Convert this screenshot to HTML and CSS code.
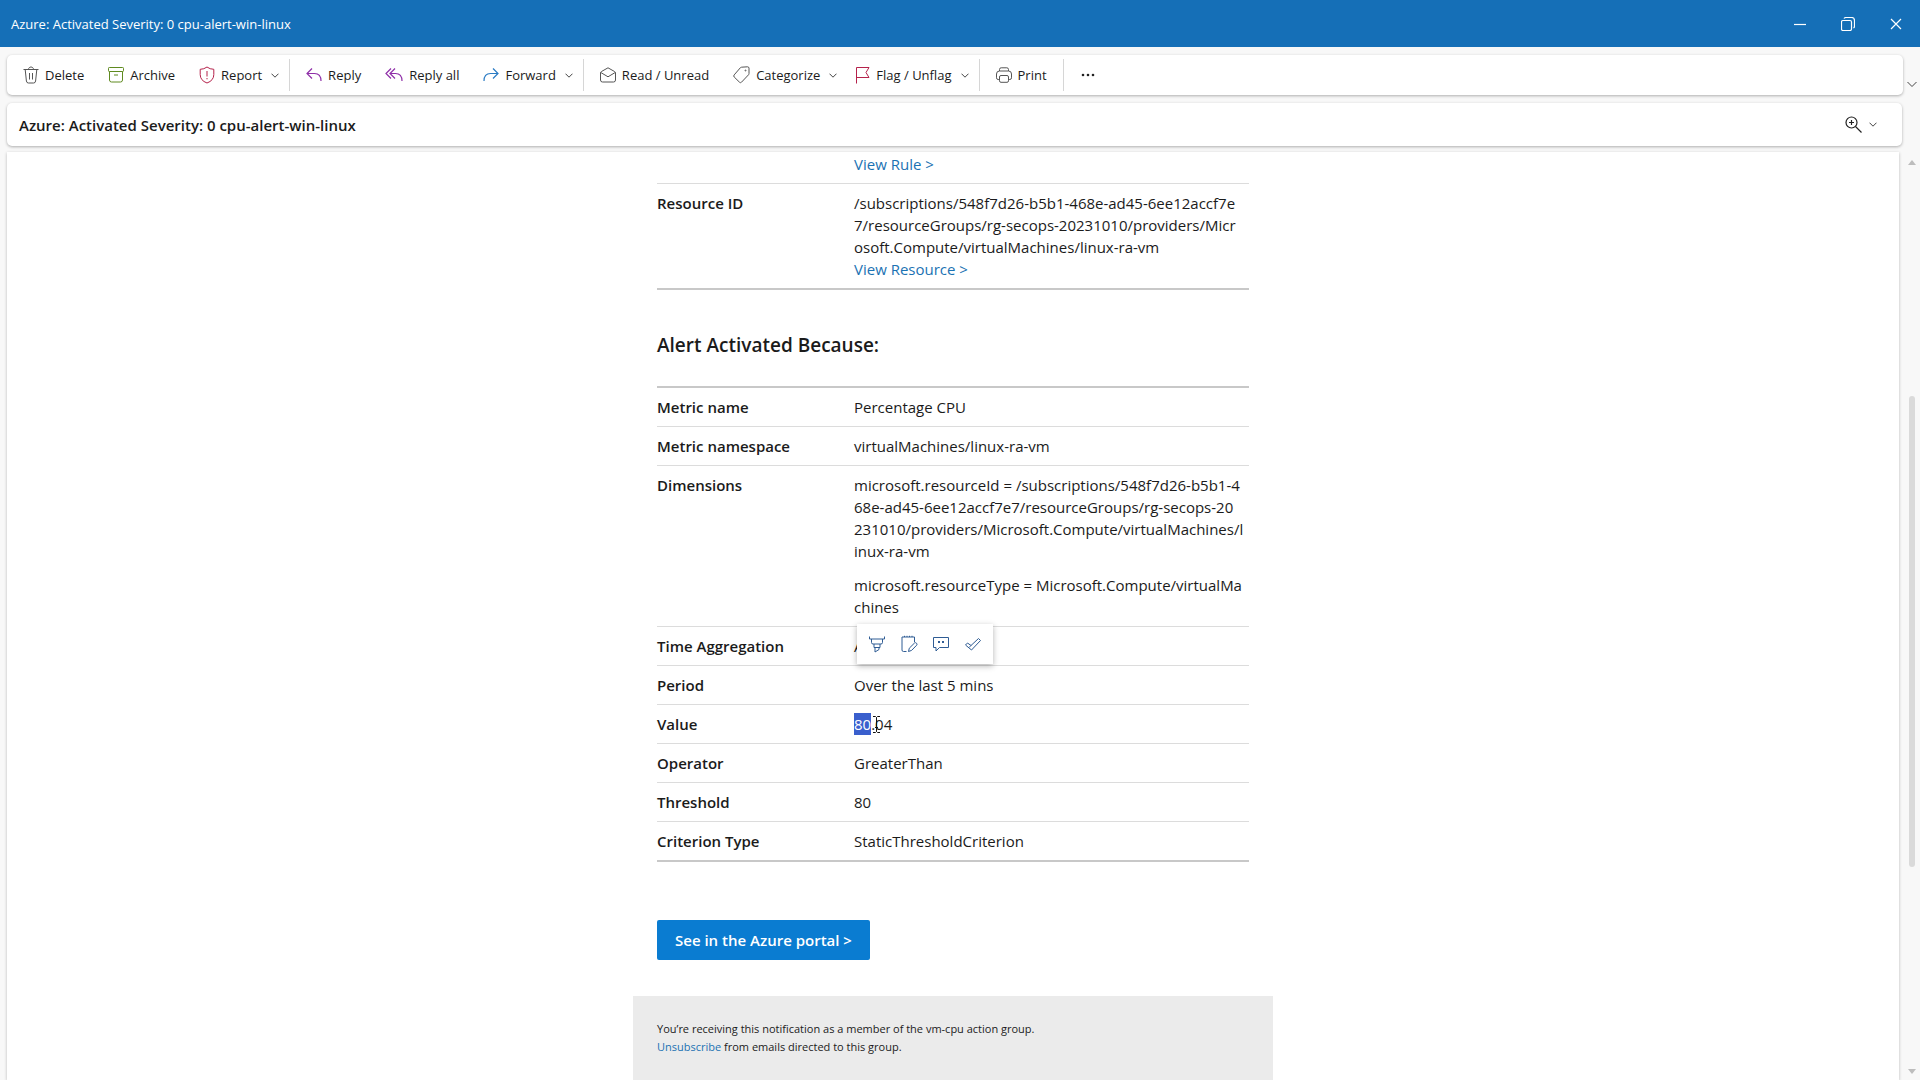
FILE: index.html
```
<!DOCTYPE html>
<html lang="en">
<head>
    <meta charset="UTF-8">
    <meta name="viewport" content="width=device-width, initial-scale=1.0">
    <title>Azure: Activated Severity: 0 cpu-alert-win-linux</title>
    <link rel="stylesheet" href="styles.css">
</head>
<body>
    <header class="titlebar">
        <span>Azure: Activated Severity: 0 cpu-alert-win-linux</span>
        <div class="window-controls">
            <button type="button" aria-label="Minimize">
                <svg width="14" height="14" viewBox="0 0 14 14"><path d="M1 7.5h12"/></svg>
            </button>
            <button type="button" aria-label="Restore">
                <svg width="14" height="14" viewBox="0 0 14 14"><rect x=".5" y="3.5" width="10" height="10" rx="1.5"/><path d="M3 1.5q.6-1 2-1h5.500q3 0 3 3V9q0 1.400-1 2"/></svg>
            </button>
            <button type="button" aria-label="Close">
                <svg width="14" height="14" viewBox="0 0 14 14"><path d="M2 2l10 10M12 2L2 12"/></svg>
            </button>
        </div>
    </header>

    <div class="ribbon">
        <nav class="toolbar card">
            <button type="button" class="tool">
                <svg class="gray" width="16" height="18" viewBox="0 0 16 18"><path d="M.5 3.500h15M5.500 3.500C5.500.2 10.500.2 10.500 3.500M2.200 3.500l1.200 11.500q.2 2 2 2h5.200q1.800 0 2-2l1.200-11.500M6.500 7v6.500M9.500 7v6.500"/></svg>
                Delete
            </button>
            <button type="button" class="tool">
                <svg class="green" width="16" height="16" viewBox="0 0 16 16"><rect x=".5" y=".5" width="15" height="4" rx=".8"/><path d="M1.500 4.500v8.500q0 2 2 2h9q2 0 2-2V4.500M6 8h4"/></svg>
                Archive
            </button>
            <button type="button" class="tool">
                <svg class="red" width="16" height="18" viewBox="0 0 16 18"><path d="M8 1q3 2.300 6.800 2.300V8.500q0 6-6.800 8.500Q1.200 14.500 1.200 8.500V3.300Q5 3.300 8 1zM8 5v5.500M8 12v1.300"/></svg>
                Report
            </button>
            <button type="button" class="drop" aria-label="Report options">
                <svg width="8" height="5" viewBox="0 0 8 5"><path d="M.5.7L4 4.200 7.500.7"/></svg>
            </button>
            <span class="divider"></span>
            <button type="button" class="tool">
                <svg class="purple" width="16" height="16" viewBox="0 0 16 16"><path d="M6 1.500L1 6.500l5 5M1 6.500h7.500q6.500 0 6.500 7.500"/></svg>
                Reply
            </button>
            <button type="button" class="tool">
                <svg class="purple" width="18" height="16" viewBox="0 0 18 16"><path d="M6 1.500L1 6.500l5 5M10 1.500L5 6.500l5 5M5 6.500h5.500q6.500 0 6.500 7.500"/></svg>
                Reply all
            </button>
            <button type="button" class="tool">
                <svg class="blue" width="16" height="16" viewBox="0 0 16 16"><path d="M10 1.500l5 5-5 5M15 6.500H7.500Q1 6.500 1 14"/></svg>
                Forward
            </button>
            <button type="button" class="drop" aria-label="Forward options">
                <svg width="8" height="5" viewBox="0 0 8 5"><path d="M.5.7L4 4.200 7.500.7"/></svg>
            </button>
            <span class="divider"></span>
            <button type="button" class="tool">
                <svg class="gray" width="16" height="16" viewBox="0 0 16 16"><path d="M.5 6q0-1 1-1.500L8 .8l6.500 3.700q1 .5 1 1.500v7q0 2-2 2h-11q-2 0-2-2zM.8 5.500L8 9.800l7.200-4.300"/></svg>
                Read / Unread
            </button>
            <button type="button" class="tool">
                <svg class="gray" width="17" height="18" viewBox="0 0 17 18"><path d="M8.500 1.200l6-.4q1.400 0 1.500 1.300v5.400q0 .7-.5 1.300L8.500 16.200q-1 1-2 0L1.200 11q-1-1 0-2.100L7.400 1.700q.4-.4 1.100-.5z"/><circle cx="12.500" cy="4.500" r=".5"/></svg>
                Categorize
            </button>
            <button type="button" class="drop" aria-label="Categorize options">
                <svg width="8" height="5" viewBox="0 0 8 5"><path d="M.5.7L4 4.200 7.500.7"/></svg>
            </button>
            <button type="button" class="tool">
                <svg class="red" width="15" height="18" viewBox="0 0 15 18"><path d="M1.500 17.500V1.500h12.500l-3 5 3 5H1.500"/></svg>
                Flag / Unflag
            </button>
            <button type="button" class="drop" aria-label="Flag options">
                <svg width="8" height="5" viewBox="0 0 8 5"><path d="M.5.7L4 4.200 7.500.7"/></svg>
            </button>
            <span class="divider"></span>
            <button type="button" class="tool">
                <svg class="gray" width="16" height="16" viewBox="0 0 16 16"><path d="M3.500 4V2.500q0-1.700 1.700-1.700h5.600q1.700 0 1.700 1.700V4M3.500 12.500H2.200q-1.700 0-1.700-1.700V7q0-3 3-3h9q3 0 3 3v3.800q0 1.700-1.700 1.700H12.500"/><rect x="3.500" y="8.500" width="9" height="6.800" rx="1.500"/></svg>
                Print
            </button>
            <span class="divider"></span>
            <button type="button" class="tool" aria-label="More">
                <svg class="dots" width="16" height="4" viewBox="0 0 16 4"><circle cx="3" cy="2" r="1.300"/><circle cx="8" cy="2" r="1.300"/><circle cx="13" cy="2" r="1.300"/></svg>
            </button>
        </nav>
        <button type="button" class="expand" aria-label="Ribbon options">
            <svg width="10" height="7" viewBox="0 0 10 7"><path d="M.5 1L5 5.500 9.500 1"/></svg>
        </button>
    </div>

    <div class="subject card">
        <h1>Azure: Activated Severity: 0 cpu-alert-win-linux</h1>
        <button type="button" class="zoom" aria-label="Zoom">
            <svg class="lens" width="17" height="17" viewBox="0 0 17 17"><circle cx="6.500" cy="6.500" r="5.500"/><path d="M10.500 10.500l6 6M6.500 4v5M4 6.500h5"/></svg>
            <svg width="8" height="5" viewBox="0 0 8 5"><path d="M.5.7L4 4.200 7.500.7"/></svg>
        </button>
    </div>

    <div class="reader">
        <main class="pane">
            <article class="mail">
                <div class="content">
                    <table class="details">
                        <tr class="clipped">
                            <th scope="row"></th>
                            <td><a href="#">View Rule &gt;</a></td>
                        </tr>
                        <tr>
                            <th scope="row">Resource ID</th>
                            <td>
                                /subscriptions/548f7d26-b5b1-468e-ad45-6ee12accf7e<br>
                                7/resourceGroups/rg-secops-20231010/providers/Micr<br>
                                osoft.Compute/virtualMachines/linux-ra-vm<br>
                                <a href="#">View Resource &gt;</a>
                            </td>
                        </tr>
                    </table>

                    <h2>Alert Activated Because:</h2>

                    <table class="details ruled">
                        <tr>
                            <th scope="row">Metric name</th>
                            <td>Percentage CPU</td>
                        </tr>
                        <tr>
                            <th scope="row">Metric namespace</th>
                            <td>virtualMachines/linux-ra-vm</td>
                        </tr>
                        <tr>
                            <th scope="row">Dimensions</th>
                            <td>
                                <p>
                                    microsoft.resourceId = /subscriptions/548f7d26-b5b1-4<br>
                                    68e-ad45-6ee12accf7e7/resourceGroups/rg-secops-20<br>
                                    231010/providers/Microsoft.Compute/virtualMachines/l<br>
                                    inux-ra-vm
                                </p>
                                <p>
                                    microsoft.resourceType = Microsoft.Compute/virtualMa<br>
                                    chines
                                </p>
                            </td>
                        </tr>
                        <tr>
                            <th scope="row">Time Aggregation</th>
                            <td class="anchor">
                                Average
                                <div class="popup">
                                    <button type="button" aria-label="Highlight">
                                        <svg width="18" height="18" viewBox="0 0 18 18"><path d="M1.500 1.500v2.500h15V1.500M3.500 4v3.500q0 1.500 1.500 1.500h8q1.500 0 1.500-1.500V4M6 9v3.500h6V9M7 12.500V17l4-2.500v-2"/></svg>
                                    </button>
                                    <button type="button" aria-label="Note">
                                        <svg width="18" height="18" viewBox="0 0 18 18"><path d="M6.500 16.500h-3q-1.500 0-1.500-1.500V2h12.500v5M4.500 2V.8M7 2V.8M9.500 2V.8M12 2V.8M8.500 16.500l.8-3.300 5.200-5.200q1-.8 2 .2t.2 2L11.600 15.400z"/></svg>
                                    </button>
                                    <button type="button" aria-label="Comment">
                                        <svg width="18" height="18" viewBox="0 0 18 18"><path d="M1.500 2.500h15v10H7.500L4 16v-3.500H1.500z"/><path class="bold" d="M6 7h2M10 7h2"/></svg>
                                    </button>
                                    <button type="button" aria-label="Mark done">
                                        <svg width="18" height="18" viewBox="0 0 18 18"><path d="M1.500 10l2-2L7 10.500 14.500 3.500l2 2L7.500 15zM7 10.500l-2 2"/></svg>
                                    </button>
                                </div>
                            </td>
                        </tr>
                        <tr>
                            <th scope="row">Period</th>
                            <td>Over the last 5 mins</td>
                        </tr>
                        <tr>
                            <th scope="row">Value</th>
                            <td class="anchor">
                                <span class="selected">80</span>.04
                                <svg class="cursor" width="9" height="17" viewBox="0 0 9 17"><path d="M1 .5h2.500l1 1 1-1H8M4.500 1.500v14M1 16.500h2.500l1-1 1 1H8M3 11.500h3"/></svg>
                            </td>
                        </tr>
                        <tr>
                            <th scope="row">Operator</th>
                            <td>GreaterThan</td>
                        </tr>
                        <tr>
                            <th scope="row">Threshold</th>
                            <td>80</td>
                        </tr>
                        <tr>
                            <th scope="row">Criterion Type</th>
                            <td>StaticThresholdCriterion</td>
                        </tr>
                    </table>

                    <a class="portal" href="#">See in the Azure portal &gt;</a>
                </div>

                <footer class="footer">
                    You’re receiving this notification as a member of the vm-cpu action group.<br>
                    <a href="#">Unsubscribe</a> from emails directed to this group.
                </footer>
            </article>
        </main>
        <div class="scrollbar">
            <svg width="8" height="5" viewBox="0 0 8 5"><path d="M0 5L4 0l4 5z"/></svg>
            <div class="track"><div class="thumb"></div></div>
            <svg width="8" height="5" viewBox="0 0 8 5"><path d="M0 0l4 5 4-5z"/></svg>
        </div>
    </div>
</body>
</html>
```
FILE: styles.css
```
* {
    box-sizing: border-box;
}
body {
    display: flex;
    flex-direction: column;
    height: 100vh;
    margin: 0;
    overflow: hidden;
    background-color: #f8f8f8;
    color: #1b1b1b;
    font-family: "Open Sans", "Noto Sans", sans-serif;
    font-size: 15px;
    line-height: 22px;
}
button {
    display: flex;
    align-items: center;
    justify-content: center;
    padding: 0;
    border: none;
    background: none;
    color: inherit;
    font: inherit;
    white-space: nowrap;
}
svg {
    display: block;
    flex: none;
    fill: none;
    stroke: #444;
    stroke-width: 1;
}
a {
    color: #1b72b3;
    text-decoration: none;
}
.card {
    background-color: #fff;
    border-radius: 5px;
    box-shadow: 0 1px 3px rgba(0, 0, 0, 0.3);
}

/* window frame */
.titlebar {
    display: flex;
    flex: none;
    align-items: center;
    justify-content: space-between;
    height: 47px;
    padding: 0 0 0 11px;
    background-color: #156fb7;
    color: #fff;
    font-size: 13px;
}
.window-controls {
    display: flex;
}
.window-controls button {
    width: 48px;
    height: 47px;
}
.window-controls svg {
    stroke: #fff;
    stroke-width: 1.2;
}

/* command bar */
.ribbon {
    display: flex;
    flex: none;
    margin: 8px 0 8px 7px;
}
.toolbar {
    display: flex;
    flex: 1;
    height: 40px;
    padding: 4px;
    font-size: 13px;
}
.tool {
    gap: 6px;
    padding: 0 12px;
}
.drop {
    padding: 0 6px 0 0;
}
.tool + .drop {
    margin-left: -3px;
}
.divider {
    width: 1px;
    margin: 0 4px;
    background-color: #d6d6d6;
}
.expand {
    width: 17px;
    padding-top: 18px;
}
.gray {
    stroke: #555;
}
.green {
    stroke: #5f8a1f;
}
.red {
    stroke: #b5224b;
}
.purple {
    stroke: #8f2fa8;
    stroke-width: 1.2;
}
.blue {
    stroke: #2a7bc4;
    stroke-width: 1.2;
}
.dots {
    fill: #222;
    stroke: none;
}

.subject {
    display: flex;
    flex: none;
    align-items: center;
    justify-content: space-between;
    height: 43px;
    margin: 0 18px 0 7px;
    padding: 0 25px 0 12px;
}
.subject h1 {
    margin: 0;
    font-size: 15px;
    font-weight: 600;
}
.zoom {
    gap: 7px;
}
.zoom .lens {
    stroke: #222;
    stroke-width: 1.2;
}

/* reading pane */
.reader {
    display: flex;
    flex: 1;
    min-height: 0;
    margin-top: 6px;
}
.pane {
    flex: 1;
    margin-left: 7px;
    overflow: hidden;
    background-color: #fff;
    box-shadow: 0 1px 3px rgba(0, 0, 0, 0.25);
}
.mail {
    width: 640px;
    margin: 0 auto;
    padding-top: 1px;
}
.content {
    padding: 0 24px 36px;
}
.details {
    width: 100%;
    border-collapse: separate;
    border-spacing: 0;
    border-bottom: 2px solid #c8c8c8;
}
.ruled {
    border-top: 2px solid #c8c8c8;
}
.details th,
.details td {
    padding: 8px 0;
    border-bottom: 1px solid #dcdcdc;
    text-align: left;
    vertical-align: top;
    white-space: nowrap;
}
.details th {
    width: 197px;
    font-weight: 600;
}
.details tr:last-child th,
.details tr:last-child td {
    border-bottom: none;
}
.details .clipped th,
.details .clipped td {
    padding-top: 0;
}
.details p {
    margin: 0;
}
.details p + p {
    margin-top: 12px;
}
h2 {
    margin: 42px 0 28px;
    font-size: 19px;
    font-weight: 600;
    line-height: 26px;
}
.anchor {
    position: relative;
}
.popup {
    position: absolute;
    top: -3px;
    left: 3px;
    display: flex;
    align-items: center;
    width: 136px;
    height: 40px;
    padding: 0 4px;
    background-color: #fff;
    box-shadow: 0 2px 6px rgba(0, 0, 0, 0.3);
}
.popup button {
    flex: 1;
}
.popup svg {
    stroke: #2f5c94;
}
.popup .bold {
    stroke-width: 2;
}
.selected {
    display: inline-block;
    background-color: #3a5fcd;
    color: #fff;
}
.cursor {
    position: absolute;
    top: 11px;
    left: 18px;
    stroke: #111;
}
.portal {
    display: inline-block;
    margin-top: 58px;
    padding: 9px 18px;
    border-radius: 2px;
    background-color: #0a7cd1;
    color: #fff;
    font-weight: 600;
    vertical-align: top;
}
.footer {
    min-height: 200px;
    padding: 24px;
    background-color: #ebebeb;
    font-size: 11px;
    line-height: 18px;
}

.scrollbar {
    display: flex;
    flex: none;
    flex-direction: column;
    align-items: center;
    width: 21px;
    padding: 8px 0 6px 5px;
}
.scrollbar svg {
    fill: #bdbdbd;
    stroke: none;
}
.track {
    display: flex;
    flex: 1;
    flex-direction: column;
}
.track::before {
    flex: 230;
    content: "";
}
.track::after {
    flex: 202;
    content: "";
}
.thumb {
    flex: 470;
    width: 6px;
    border-radius: 3px;
    background-color: #dadada;
}
```
